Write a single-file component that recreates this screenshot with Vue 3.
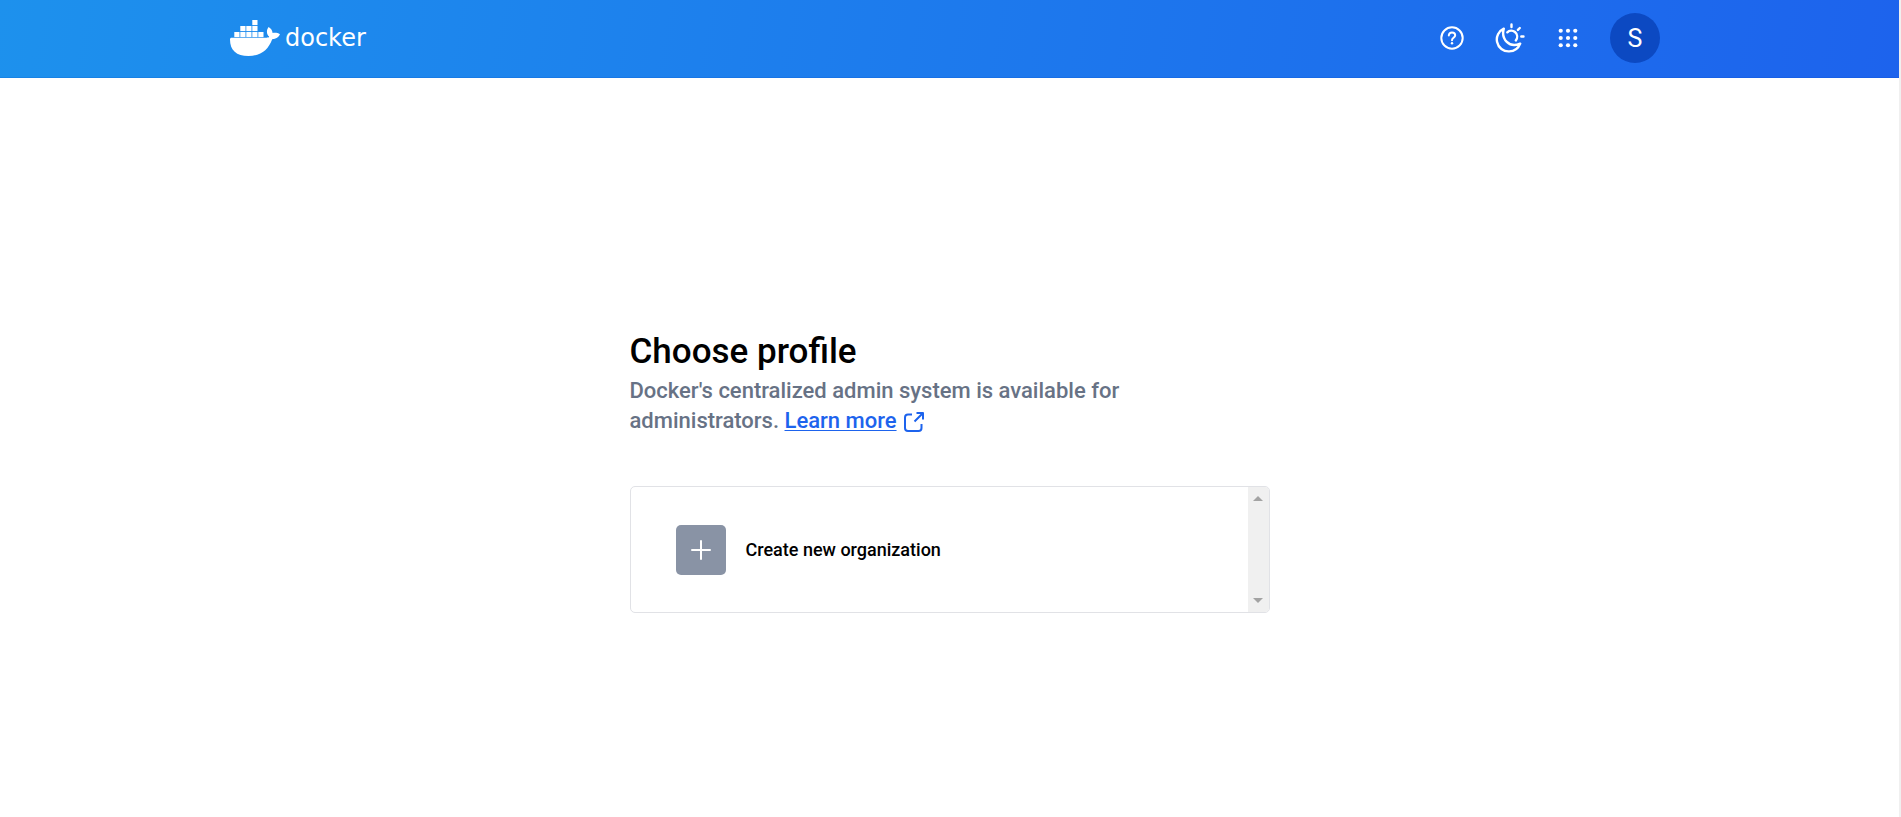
<script setup>
import { ref } from 'vue'

const dots = [3, 11, 19].flatMap((y) => [3, 11, 19].map((x) => ({ x, y })))
const blocks = [
  [23, 0],
  [11, 6], [17, 6], [23, 6],
  [5, 12], [11, 12], [17, 12], [23, 12], [29, 12],
]
const profiles = ref([{ id: 'new', label: 'Create new organization' }])
</script>

<template>
  <div class="page">
    <header class="topbar">
      <div class="topbar-inner">
        <a class="brand" href="#" aria-label="docker home">
          <svg class="whale" viewBox="0 0 50 36" aria-hidden="true">
            <rect v-for="[x, y] in blocks" :key="`${x}-${y}`" :x="x - 0.7" :y="y" width="5.2" height="5.1" />
            <path d="M1.6 17.8H36.5C38.2 17.8 39 17.4 39.2 16.6C36.6 14.4 36 10.4 38.6 7C41 8.4 42.4 10.4 42.6 13C45 12.6 47.8 12.8 50 14.3C48.8 17.4 46 19.2 42.2 19.2C38.2 29.8 31 36 18.5 36C6.4 36 0 30.2 0 19.4C0 18.3 0.6 17.8 1.6 17.8Z" />
          </svg>
          <span class="wordmark">docker</span>
        </a>
        <nav class="tools" aria-label="Account tools">
          <button class="tool" type="button" aria-label="Help">
            <svg class="help" viewBox="0 0 24 24" aria-hidden="true">
              <circle cx="12" cy="12" r="10.7" />
              <path d="M8.8 9.4C9 7.5 10.3 6.5 12 6.5C13.9 6.5 15.2 7.7 15.2 9.3C15.2 11.8 12 11.8 12 14.2" />
              <circle class="solid" cx="12" cy="17.3" r="1.2" />
            </svg>
          </button>
          <button class="tool" type="button" aria-label="Switch theme">
            <svg class="theme" viewBox="0 0 30 30" aria-hidden="true">
              <path d="M8.8 5.6C3.6 8 .9 13.6 2.1 19C3.3 24.8 8.4 28.7 14.2 28.4C19.2 28.2 23.4 25.2 25.2 20.6C20.4 22.8 15.2 22.3 11.8 18.9C8.4 15.5 7.4 10.4 8.8 5.6Z" />
              <path d="M12.3 9.3C14.3 7.3 17.7 7.1 20 9C22.6 11.2 22.8 14.8 20.8 17.4M16.5 1.5V4M22.9 6.9L24.8 5M26.3 13.5H28.5" />
            </svg>
          </button>
          <button class="tool" type="button" aria-label="Apps">
            <svg class="apps" viewBox="0 0 22 22" aria-hidden="true">
              <circle v-for="d in dots" :key="`${d.x}-${d.y}`" :cx="d.x" :cy="d.y" r="2.3" />
            </svg>
          </button>
          <button class="avatar" type="button" aria-label="Account S">S</button>
        </nav>
      </div>
    </header>

    <main class="content">
      <h1>Choose profile</h1>
      <p class="intro">
        Docker's centralized admin system is available for administrators.
        <a href="#">Learn more</a>
        <svg class="external" viewBox="0 0 20 20" aria-hidden="true">
          <path d="M8 2.5H4C2.3 2.5 1 3.8 1 5.5V16C1 17.7 2.3 19 4 19H14.5C16.2 19 17.5 17.7 17.5 16V12M12.5 1H19V7.5M19 1L10.5 9.5" />
        </svg>
      </p>
      <section class="picker" aria-label="Profiles">
        <ul class="profiles">
          <li v-for="p in profiles" :key="p.id">
            <button class="profile" type="button">
              <span class="tile">
                <svg viewBox="0 0 20 20" aria-hidden="true"><path d="M10 1V19M1 10H19" /></svg>
              </span>
              <span>{{ p.label }}</span>
            </button>
          </li>
        </ul>
        <div class="track" aria-hidden="true">
          <svg viewBox="0 0 10 5"><path d="M5 0L10 5H0Z" /></svg>
          <svg viewBox="0 0 10 5"><path d="M0 0H10L5 5Z" /></svg>
        </div>
      </section>
    </main>
  </div>
</template>

<style>
body {
  background: #fff;
}
</style>

<style scoped>
.page {
  box-sizing: border-box;
  min-height: 100vh;
  border-right: 2px solid #f0f0f0;
  font-family: Roboto, "Liberation Sans", sans-serif;
  color: #000;
}
button {
  padding: 0;
  border: 0;
  background: none;
  color: inherit;
  font: inherit;
  cursor: pointer;
}
svg {
  display: block;
}
.topbar {
  border-bottom: 1px solid rgba(0, 60, 190, 0.15);
  background: linear-gradient(100deg, #1d91ed 0%, #1d63ed 100%);
  background-origin: border-box;
  color: #fff;
}
.topbar-inner {
  box-sizing: border-box;
  display: flex;
  align-items: center;
  justify-content: space-between;
  max-width: 1439px;
  margin: 0 auto;
  padding: 13px 9px 14px 0;
}
.brand {
  display: flex;
  align-items: center;
  gap: 5px;
  color: #fff;
  text-decoration: none;
}
.whale {
  width: 50px;
  height: 36px;
  fill: currentColor;
}
.wordmark {
  font: 24px/32px "DejaVu Sans", sans-serif;
}
.tools {
  display: flex;
  align-items: center;
}
.tool {
  display: grid;
  place-items: center;
  width: 58px;
  height: 50px;
}
.tool svg {
  fill: none;
  stroke: currentColor;
  stroke-width: 2;
  stroke-linecap: round;
  stroke-linejoin: round;
}
.tool .help {
  width: 24px;
  height: 24px;
}
.tool .help .solid {
  fill: currentColor;
  stroke: none;
}
.tool .theme {
  width: 30px;
  height: 30px;
  stroke-width: 2.4;
}
.tool .apps {
  width: 20px;
  height: 20px;
  fill: currentColor;
  stroke: none;
}
.avatar {
  width: 50px;
  height: 50px;
  margin-left: 13px;
  border-radius: 50%;
  background: #0c49c2;
  font-size: 25px;
}
.content {
  max-width: 640px;
  margin: 0 auto;
  padding: 252px 0 40px;
}
h1 {
  margin: 0;
  font-size: 35px;
  font-weight: 500;
  line-height: 44px;
}
.intro {
  max-width: 520px;
  margin: 2px 0 50px;
  color: #677285;
  font-size: 22px;
  font-weight: 500;
  line-height: 30px;
}
.intro a {
  color: #1d63ed;
  text-decoration-thickness: 1px;
  text-underline-offset: 2px;
}
.external {
  display: inline-block;
  width: 20px;
  height: 20px;
  margin-left: 7px;
  vertical-align: -4px;
  fill: none;
  stroke: #1d63ed;
  stroke-width: 2;
  stroke-linejoin: round;
}
.picker {
  display: flex;
  overflow: hidden;
  border: 1px solid #e1e2e6;
  border-radius: 5px;
}
.profiles {
  flex: 1;
  margin: 0;
  padding: 0;
  list-style: none;
}
.profile {
  display: flex;
  align-items: center;
  gap: 20px;
  width: 100%;
  padding: 38px 45px 37px;
  font-size: 18px;
  font-weight: 500;
  line-height: 22px;
  text-align: left;
}
.tile {
  display: grid;
  place-items: center;
  width: 50px;
  height: 50px;
  border-radius: 5px;
  background: #8993a5;
}
.tile svg {
  width: 20px;
  height: 20px;
  stroke: #fff;
  stroke-width: 2;
  stroke-linecap: round;
}
.track {
  display: flex;
  flex-direction: column;
  align-items: center;
  justify-content: space-between;
  width: 21px;
  padding: 9px 0;
  background: #f0f0f0;
}
.track svg {
  width: 10px;
  height: 5px;
  fill: #a3a3a3;
}
</style>
